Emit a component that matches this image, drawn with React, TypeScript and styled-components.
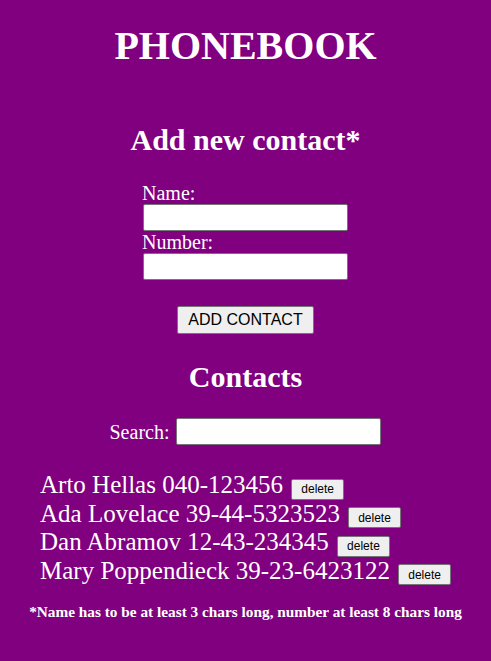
import React from "react";
import styled, { createGlobalStyle } from "styled-components";

const Global = createGlobalStyle`
  html, body {
    margin: 0;
    padding: 0;
    background: #800080;
  }
  body {
    min-height: 100vh;
    font-family: "Liberation Serif", "Times New Roman", serif;
    color: #ffffff;
  }
`;

const Page = styled.div`
  display: flex;
  flex-direction: column;
  align-items: center;
  padding-top: 24px;
  min-height: 661px;
  box-sizing: border-box;
`;

const Title = styled.h1`
  margin: 0;
  font-size: 40px;
  font-weight: bold;
  line-height: 44px;
`;

const Heading = styled.h2<{ $top: number }>`
  margin: ${(p) => p.$top}px 0 0;
  font-size: 30px;
  font-weight: bold;
  line-height: 33px;
`;

const Form = styled.form`
  display: flex;
  flex-direction: column;
  align-items: center;
  margin-top: 26px;
`;

const Fields = styled.div`
  display: flex;
  flex-direction: column;
  align-items: flex-start;
  width: 207px;
`;

const Label = styled.label`
  font-size: 20px;
  line-height: 22px;
`;

const TextInput = styled.input`
  box-sizing: border-box;
  width: 205px;
  height: 27px;
  margin: 0 0 0 1px;
  border: 1px solid #767676;
  border-radius: 2px;
  background: #ffffff;
  font-family: "Liberation Sans", Arial, sans-serif;
  font-size: 16px;
  padding: 0 4px;
`;

const AddButton = styled.button`
  margin-top: 26px;
  height: 28px;
  padding: 0 10px;
  border: 1px solid #767676;
  border-radius: 2px;
  background: #efefef;
  color: #000000;
  font-family: "Liberation Sans", Arial, sans-serif;
  font-size: 16px;
`;

const SearchRow = styled.div`
  display: flex;
  align-items: center;
  gap: 6px;
  margin-top: 25px;
`;

const List = styled.ul`
  align-self: stretch;
  list-style: none;
  margin: 26px 0 0;
  padding: 0 0 0 40px;
`;

const Item = styled.li`
  font-size: 25px;
  line-height: 28.5px;
`;

const DeleteButton = styled.button`
  height: 21px;
  margin-left: 2px;
  padding: 0 9px;
  border: 1px solid #767676;
  border-radius: 2px;
  background: #efefef;
  color: #000000;
  font-family: "Liberation Sans", Arial, sans-serif;
  font-size: 12px;
  vertical-align: baseline;
`;

const Note = styled.p`
  margin: 18px 0 0;
  font-size: 15.3px;
  font-weight: bold;
  line-height: 17px;
  text-align: center;
`;

const contacts = [
  { name: "Arto Hellas", number: "040-123456" },
  { name: "Ada Lovelace", number: "39-44-5323523" },
  { name: "Dan Abramov", number: "12-43-234345" },
  { name: "Mary Poppendieck", number: "39-23-6423122" },
];

export default function App() {
  return (
    <>
      <Global />
      <Page>
        <Title>PHONEBOOK</Title>
        <Heading $top={55}>Add new contact*</Heading>
        <Form onSubmit={(e) => e.preventDefault()}>
          <Fields>
            <Label htmlFor="name">Name:</Label>
            <TextInput id="name" />
            <Label htmlFor="number">Number:</Label>
            <TextInput id="number" />
          </Fields>
          <AddButton type="submit">ADD CONTACT</AddButton>
        </Form>
        <Heading $top={26}>Contacts</Heading>
        <SearchRow>
          <Label htmlFor="search">Search:</Label>
          <TextInput id="search" />
        </SearchRow>
        <List>
          {contacts.map((c) => (
            <Item key={c.name}>
              {c.name} {c.number} <DeleteButton>delete</DeleteButton>
            </Item>
          ))}
        </List>
        <Note>*Name has to be at least 3 chars long, number at least 8 chars long</Note>
      </Page>
    </>
  );
}
